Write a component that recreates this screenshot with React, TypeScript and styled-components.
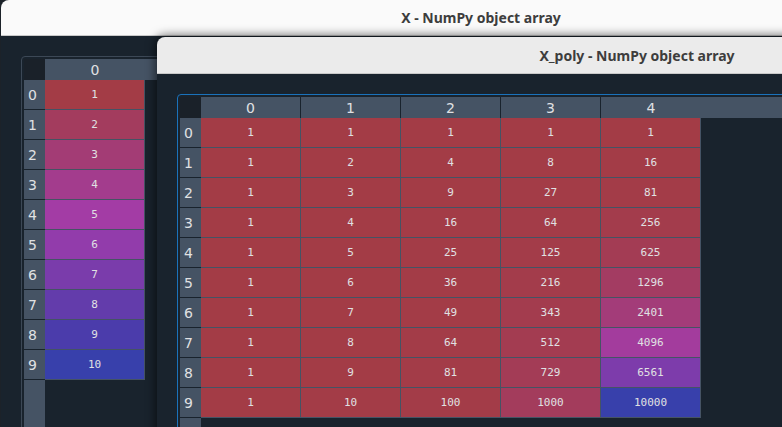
import React from "react";
import styled, { createGlobalStyle } from "styled-components";

const BG = "#19232d";
const HEADER = "#455364";
const TEXT = "#e0e1e3";

const GlobalStyle = createGlobalStyle`
  html, body { margin: 0; padding: 0; background: #1c2229; }
  #root { width: 782px; height: 427px; }
  * { box-sizing: border-box; }
`;

function hsvToRgb(h: number, s: number, v: number): [number, number, number] {
  const hh = ((h % 1) + 1) % 1 * 6;
  const i = Math.floor(hh);
  const f = hh - i;
  const p = v * (1 - s);
  const q = v * (1 - s * f);
  const t = v * (1 - s * (1 - f));
  const table: [number, number, number][] = [
    [v, t, p],
    [q, v, p],
    [p, v, t],
    [p, q, v],
    [t, p, v],
    [v, p, q],
  ];
  return table[i % 6];
}

function cellColor(value: number, vmin: number, vmax: number): string {
  const hue = 0.66 + (0.33 * (vmax - value)) / (vmax - vmin);
  const [r, g, b] = hsvToRgb(hue, 0.7, 1);
  const a = 0.6;
  const mix = (c: number, base: number) => Math.round(a * c * 255 + (1 - a) * base);
  return `rgb(${mix(r, 25)}, ${mix(g, 35)}, ${mix(b, 45)})`;
}

const Desktop = styled.div`
  position: relative;
  width: 782px;
  height: 427px;
  overflow: hidden;
  background: #1c2229;
`;

const Window = styled.div<{ $left: number; $top: number; $shadow?: boolean }>`
  position: absolute;
  left: ${(p) => p.$left}px;
  top: ${(p) => p.$top}px;
  width: 960px;
  height: 560px;
  display: flex;
  flex-direction: column;
  border-radius: 8px 8px 0 0;
  overflow: hidden;
  box-shadow: ${(p) => (p.$shadow ? "0 0 10px 2px rgba(0,0,0,0.55)" : "none")};
`;

const TitleBar = styled.div<{ $height: number; $bg: string }>`
  flex: none;
  height: ${(p) => p.$height + 1}px;
  background: ${(p) => p.$bg};
  border-bottom: 1px solid #c9c9c9;
  display: flex;
  align-items: center;
  justify-content: center;
  font-family: "Noto Sans", "DejaVu Sans", sans-serif;
  font-weight: 700;
  font-size: 14px;
  color: #3d3d3d;
`;

const Body = styled.div`
  flex: 1;
  min-height: 0;
  background: ${BG};
  padding: 20px 0 0 20px;
  display: flex;
`;

const Frame = styled.div<{ $color: string }>`
  flex: 1;
  border: 1px solid ${(p) => p.$color};
  border-radius: 4px;
  padding: 2px;
  display: flex;
  flex-direction: column;
`;

const HeaderRow = styled.div`
  flex: none;
  height: 21px;
  display: flex;
`;

const Corner = styled.div`
  flex: none;
  width: 21px;
  background: #1a2129;
`;

const ColHeader = styled.div<{ $last?: boolean }>`
  flex: none;
  width: 100px;
  background: ${HEADER};
  border-right: ${(p) => (p.$last ? "none" : `1px solid ${BG}`)};
  display: flex;
  align-items: center;
  justify-content: center;
  font-family: "DejaVu Sans", sans-serif;
  font-size: 14px;
  color: ${TEXT};
`;

const HeaderFiller = styled.div`
  flex: 1;
  background: ${HEADER};
`;

const TableBody = styled.div`
  flex: 1;
  display: flex;
  min-height: 0;
`;

const VHeader = styled.div`
  flex: none;
  width: 21px;
  background: ${HEADER};
  display: flex;
  flex-direction: column;
`;

const RowLabel = styled.div`
  height: 30px;
  border-bottom: 1px solid ${BG};
  padding-left: 4px;
  display: flex;
  align-items: center;
  font-family: "DejaVu Sans", sans-serif;
  font-size: 14px;
  color: ${TEXT};
`;

const DataArea = styled.div`
  display: flex;
  flex-direction: column;
  align-self: flex-start;
`;

const DataRow = styled.div`
  display: flex;
`;

const Cell = styled.div<{ $bg: string }>`
  width: 100px;
  height: 30px;
  background: ${(p) => p.$bg};
  border-right: 1px solid ${HEADER};
  border-bottom: 1px solid ${HEADER};
  display: flex;
  align-items: center;
  justify-content: center;
  font-family: "DejaVu Sans Mono", monospace;
  font-size: 11px;
  color: ${TEXT};
`;

type ArrayViewProps = { data: number[][]; frameColor: string };

function ArrayView({ data, frameColor }: ArrayViewProps) {
  const flat = data.flat();
  const vmin = Math.min(...flat);
  const vmax = Math.max(...flat);
  const cols = data[0].length;
  return (
    <Frame $color={frameColor}>
      <HeaderRow>
        <Corner />
        {Array.from({ length: cols }, (_, c) => (
          <ColHeader key={c} $last={c === cols - 1}>
            {c}
          </ColHeader>
        ))}
        <HeaderFiller />
      </HeaderRow>
      <TableBody>
        <VHeader>
          {data.map((_, r) => (
            <RowLabel key={r}>{r}</RowLabel>
          ))}
        </VHeader>
        <DataArea>
          {data.map((row, r) => (
            <DataRow key={r}>
              {row.map((v, c) => (
                <Cell key={c} $bg={cellColor(v, vmin, vmax)}>
                  {v}
                </Cell>
              ))}
            </DataRow>
          ))}
        </DataArea>
      </TableBody>
    </Frame>
  );
}

const xData = Array.from({ length: 10 }, (_, i) => [i + 1]);
const polyData = Array.from({ length: 10 }, (_, i) =>
  Array.from({ length: 5 }, (_, p) => Math.pow(i + 1, p))
);

export default function App() {
  return (
    <Desktop>
      <GlobalStyle />
      <Window $left={1} $top={0}>
        <TitleBar $height={35} $bg="#fafafa">
          X - NumPy object array
        </TitleBar>
        <Body>
          <ArrayView data={xData} frameColor="#3c4856" />
        </Body>
      </Window>
      <Window $left={157} $top={37} $shadow>
        <TitleBar $height={36} $bg="#ebebeb">
          X_poly - NumPy object array
        </TitleBar>
        <Body>
          <ArrayView data={polyData} frameColor="#1a72bb" />
        </Body>
      </Window>
    </Desktop>
  );
}
